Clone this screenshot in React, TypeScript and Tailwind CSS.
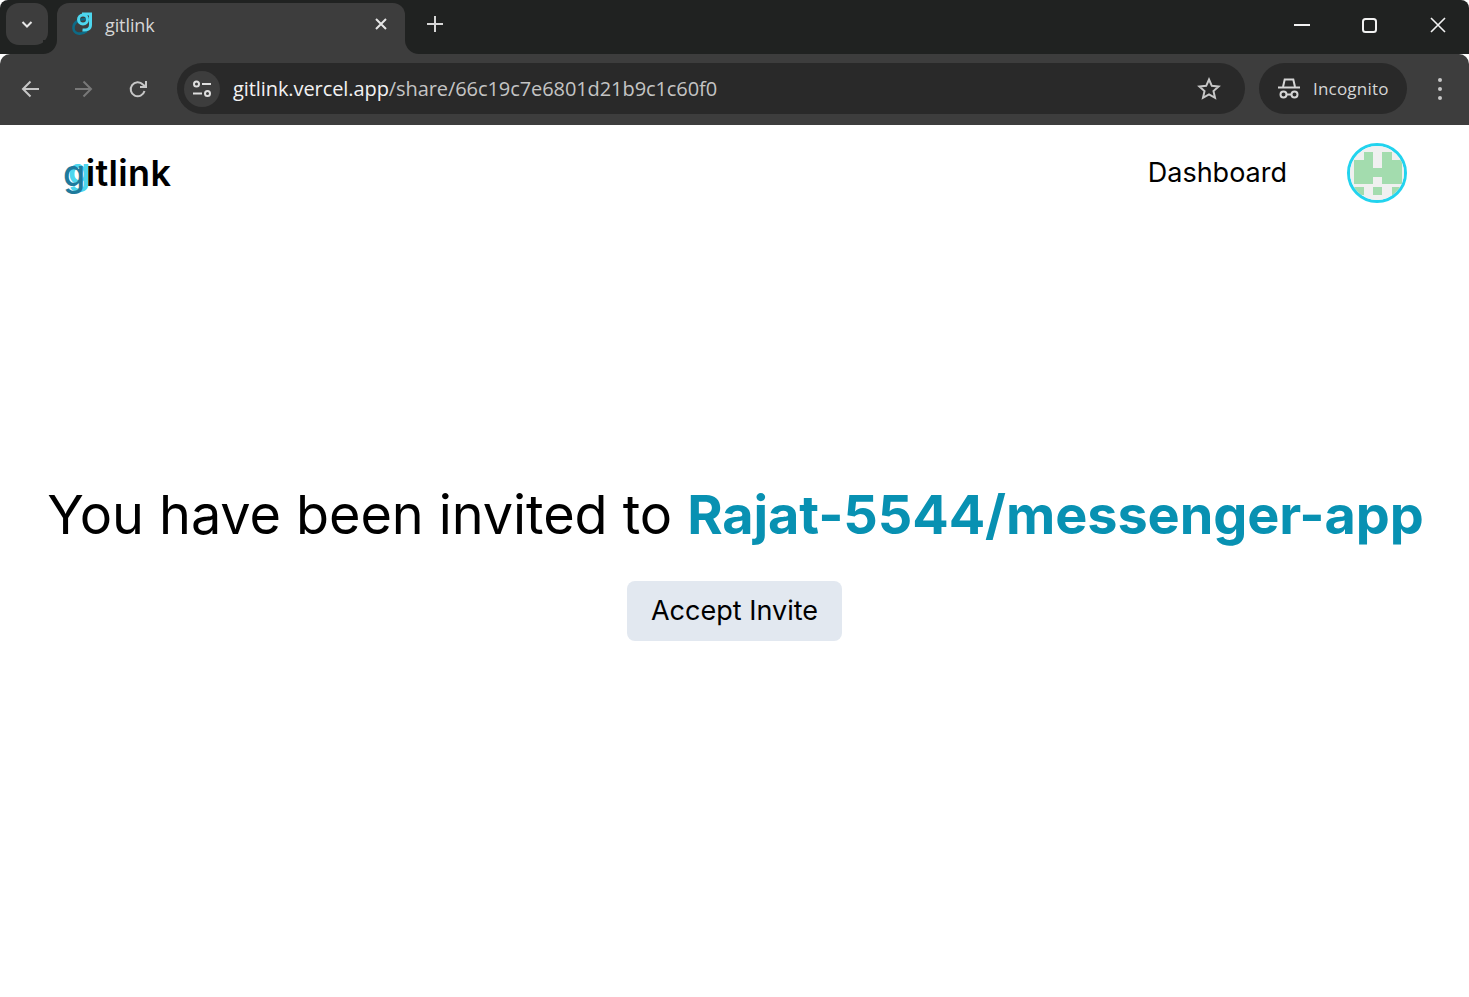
function Favicon() {
  return (
    <svg width="24" height="26" viewBox="0 0 24 26" fill="none" className="block -mt-[1px]">
      <path d="M15 7C8 7 2 10 2.500 16.500 3 22 10 23.500 16 19" stroke="#0e6a85" strokeWidth="2.600" />
      <circle cx="12" cy="7.500" r="4.500" stroke="#4dd6ee" strokeWidth="3" />
      <path d="M11 2h8.500v11c0 4-3.500 5.500-8 5" stroke="#4dd6ee" strokeWidth="3" />
    </svg>
  );
}

// inner 54px box of the avatar, upscaled 5x5 identicon so it is blurred a bit
const avatarCells = [
  [4, 14, 10, 24],
  [14, 6, 9, 32],
  [32, 6, 10, 32],
  [42, 14, 10, 24],
  [23, 22, 9, 9],
  [4, 41, 10, 8],
  [23, 41, 9, 8],
  [42, 41, 10, 8],
];

function Identicon() {
  return (
    <svg viewBox="0 0 54 54" className="w-[54px] h-[54px] block" style={{ filter: "blur(0.7px)" }}>
      <rect width="54" height="54" fill="#f0f0f0" />
      {avatarCells.map(([x, y, w, h]) => (
        <rect key={`${x}-${y}`} x={x} y={y} width={w} height={h} fill="#a3dcae" />
      ))}
    </svg>
  );
}

export default function App() {
  return (
    <div className="min-h-[997px] flex flex-col bg-white font-['Inter',sans-serif] text-black">
      {/* tab strip */}
      <div className="h-[54px] bg-[#202221] rounded-t-[8px] flex items-start shrink-0">
        <button className="ml-[6px] mt-[3px] w-[42px] h-[42px] rounded-[13px] bg-[#3d3d3d] flex items-center justify-center">
          <svg width="14" height="14" viewBox="0 0 14 14" fill="none" stroke="#e6e6e6" strokeWidth="2">
            <path d="M2.500 5l4.500 4.500L11.500 5" />
          </svg>
        </button>
        <div className="relative ml-[9px] mt-[3px] w-[348px] h-[51px] bg-[#3d3d3d] rounded-t-[12px] flex items-center pl-[14px] pr-[17px] pb-[6px]">
          <span className="absolute bottom-0 left-[-14px] w-[14px] h-[14px] bg-[#3d3d3d]">
            <span className="block w-full h-full bg-[#202221] rounded-br-[14px]" />
          </span>
          <span className="absolute bottom-0 right-[-14px] w-[14px] h-[14px] bg-[#3d3d3d]">
            <span className="block w-full h-full bg-[#202221] rounded-bl-[14px]" />
          </span>
          <Favicon />
          <span className="ml-[10px] font-['Open_Sans',sans-serif] text-[18px] tracking-[-0.1px] text-[#d6d6d6]">gitlink</span>
          <svg className="ml-auto -mt-[3px]" width="14" height="14" viewBox="0 0 14 14" fill="none" stroke="#e6e6e6" strokeWidth="2">
            <path d="M2 2l10 10M12 2L2 12" />
          </svg>
        </div>
        <svg className="ml-[22px] mt-[16px]" width="16" height="16" viewBox="0 0 16 16" fill="none" stroke="#d6d6d6" strokeWidth="2">
          <path d="M8 0v16M0 8h16" />
        </svg>
        <div className="ml-auto flex items-center h-[50px]">
          <svg width="16" height="2" viewBox="0 0 16 2"><rect width="16" height="2" fill="#f2f2f2" /></svg>
          <svg className="ml-[52px]" width="15" height="15" viewBox="0 0 15 15" fill="none" stroke="#f2f2f2" strokeWidth="2">
            <rect x="1" y="1" width="13" height="13" rx="2.500" />
          </svg>
          <svg className="ml-[53px] mr-[23px]" width="16" height="16" viewBox="0 0 16 16" fill="none" stroke="#f2f2f2" strokeWidth="1.600">
            <path d="M1 1l14 14M15 1L1 15" />
          </svg>
        </div>
      </div>

      {/* toolbar */}
      <div className="h-[71px] bg-[#3d3d3d] rounded-t-[10px] flex items-center shrink-0 pb-[2px]">
        <svg className="ml-[21px]" width="18" height="18" viewBox="0 0 18 18" fill="none" stroke="#c7c7c7" strokeWidth="2">
          <path d="M18 9H2M9.500 1.500L2 9l7.500 7.500" />
        </svg>
        <svg className="ml-[36px]" width="18" height="18" viewBox="0 0 18 18" fill="none" stroke="#787878" strokeWidth="2">
          <path d="M0 9h16M8.500 1.500L16 9l-7.500 7.500" />
        </svg>
        <svg className="ml-[35px]" width="20" height="20" viewBox="0 0 20 20" fill="none" stroke="#c7c7c7" strokeWidth="2">
          <path d="M16.500 12a7 7 0 1 1-1.600-6.500L18 8" />
          <path d="M18 2v6h-6" />
        </svg>
        <div className="ml-[29px] flex-1 h-[51px] rounded-full bg-[#292929] flex items-center pl-[7px] pr-[24px]">
          <span className="w-[36px] h-[36px] rounded-full bg-[#3d3d3d] flex items-center justify-center">
            <svg width="20" height="20" viewBox="0 0 20 20" fill="none" stroke="#dedede" strokeWidth="2">
              <circle cx="4.500" cy="5" r="2.500" />
              <path d="M10 5h9M1 14.500h9" />
              <circle cx="15.500" cy="14.500" r="2.500" />
            </svg>
          </span>
          <span className="ml-[13px] font-['Open_Sans',sans-serif] text-[20px] tracking-[-0.08px] text-[#f2f2f2]">
            gitlink.vercel.app<span className="text-[#c4c4c4]">/share/66c19c7e6801d21b9c1c60f0</span>
          </span>
          <svg className="ml-auto" width="24" height="24" viewBox="0 0 24 24" fill="none" stroke="#c7c7c7" strokeWidth="2">
            <path d="M12 2.500l2.800 6.300 6.800.7-5.100 4.600 1.500 6.700-6-3.500-6 3.500 1.500-6.700L2.400 9.500l6.800-.7z" />
          </svg>
        </div>
        <div className="ml-[14px] w-[148px] h-[51px] rounded-full bg-[#292929] flex items-center pl-[19px]">
          <svg width="22" height="22" viewBox="0 0 22 22" fill="none" stroke="#d6d6d6" strokeWidth="2">
            <path d="M5 9l1.700-7.500h8.600L17 9" />
            <path d="M0 9.500h22" />
            <circle cx="5.500" cy="16.500" r="3" />
            <circle cx="16.500" cy="16.500" r="3" />
            <path d="M8.500 16.500h5" />
          </svg>
          <span className="ml-[13px] font-['Open_Sans',sans-serif] text-[17px] tracking-[0.2px] text-[#d6d6d6]">Incognito</span>
        </div>
        <div className="ml-[31px] mr-[27px] flex flex-col gap-[5px]">
          <span className="w-[4px] h-[4px] rounded-full bg-[#c7c7c7]" />
          <span className="w-[4px] h-[4px] rounded-full bg-[#c7c7c7]" />
          <span className="w-[4px] h-[4px] rounded-full bg-[#c7c7c7]" />
        </div>
      </div>

      {/* site nav */}
      <nav className="h-[96px] flex items-center pl-[63px] pr-[62px] shrink-0">
        <span className="relative text-[36px] font-semibold leading-none tracking-[0.35px]">
          <span className="absolute left-[5px] top-[-2px] text-[#4dd6ee]">g</span>
          <span className="relative font-medium text-[#1f7a9c]">g</span>itlink
        </span>
        <a className="ml-auto text-[27px]">Dashboard</a>
        <span className="ml-[60px] w-[60px] h-[60px] rounded-full border-[3px] border-[#22d3ee] overflow-hidden">
          <Identicon />
        </span>
      </nav>

      {/* invite */}
      <main className="flex flex-col items-center pt-[262px]">
        <h1 className="ml-[2px] text-[54px] leading-[64px] tracking-[-0.08px] whitespace-nowrap">
          You have been invited to <span className="font-bold text-[#0891b2]">Rajat-5544/messenger-app</span>
        </h1>
        <button className="mt-[34px] h-[60px] px-[24px] rounded-[8px] bg-[#e2e8f0] text-[27px]">Accept Invite</button>
      </main>
    </div>
  );
}
